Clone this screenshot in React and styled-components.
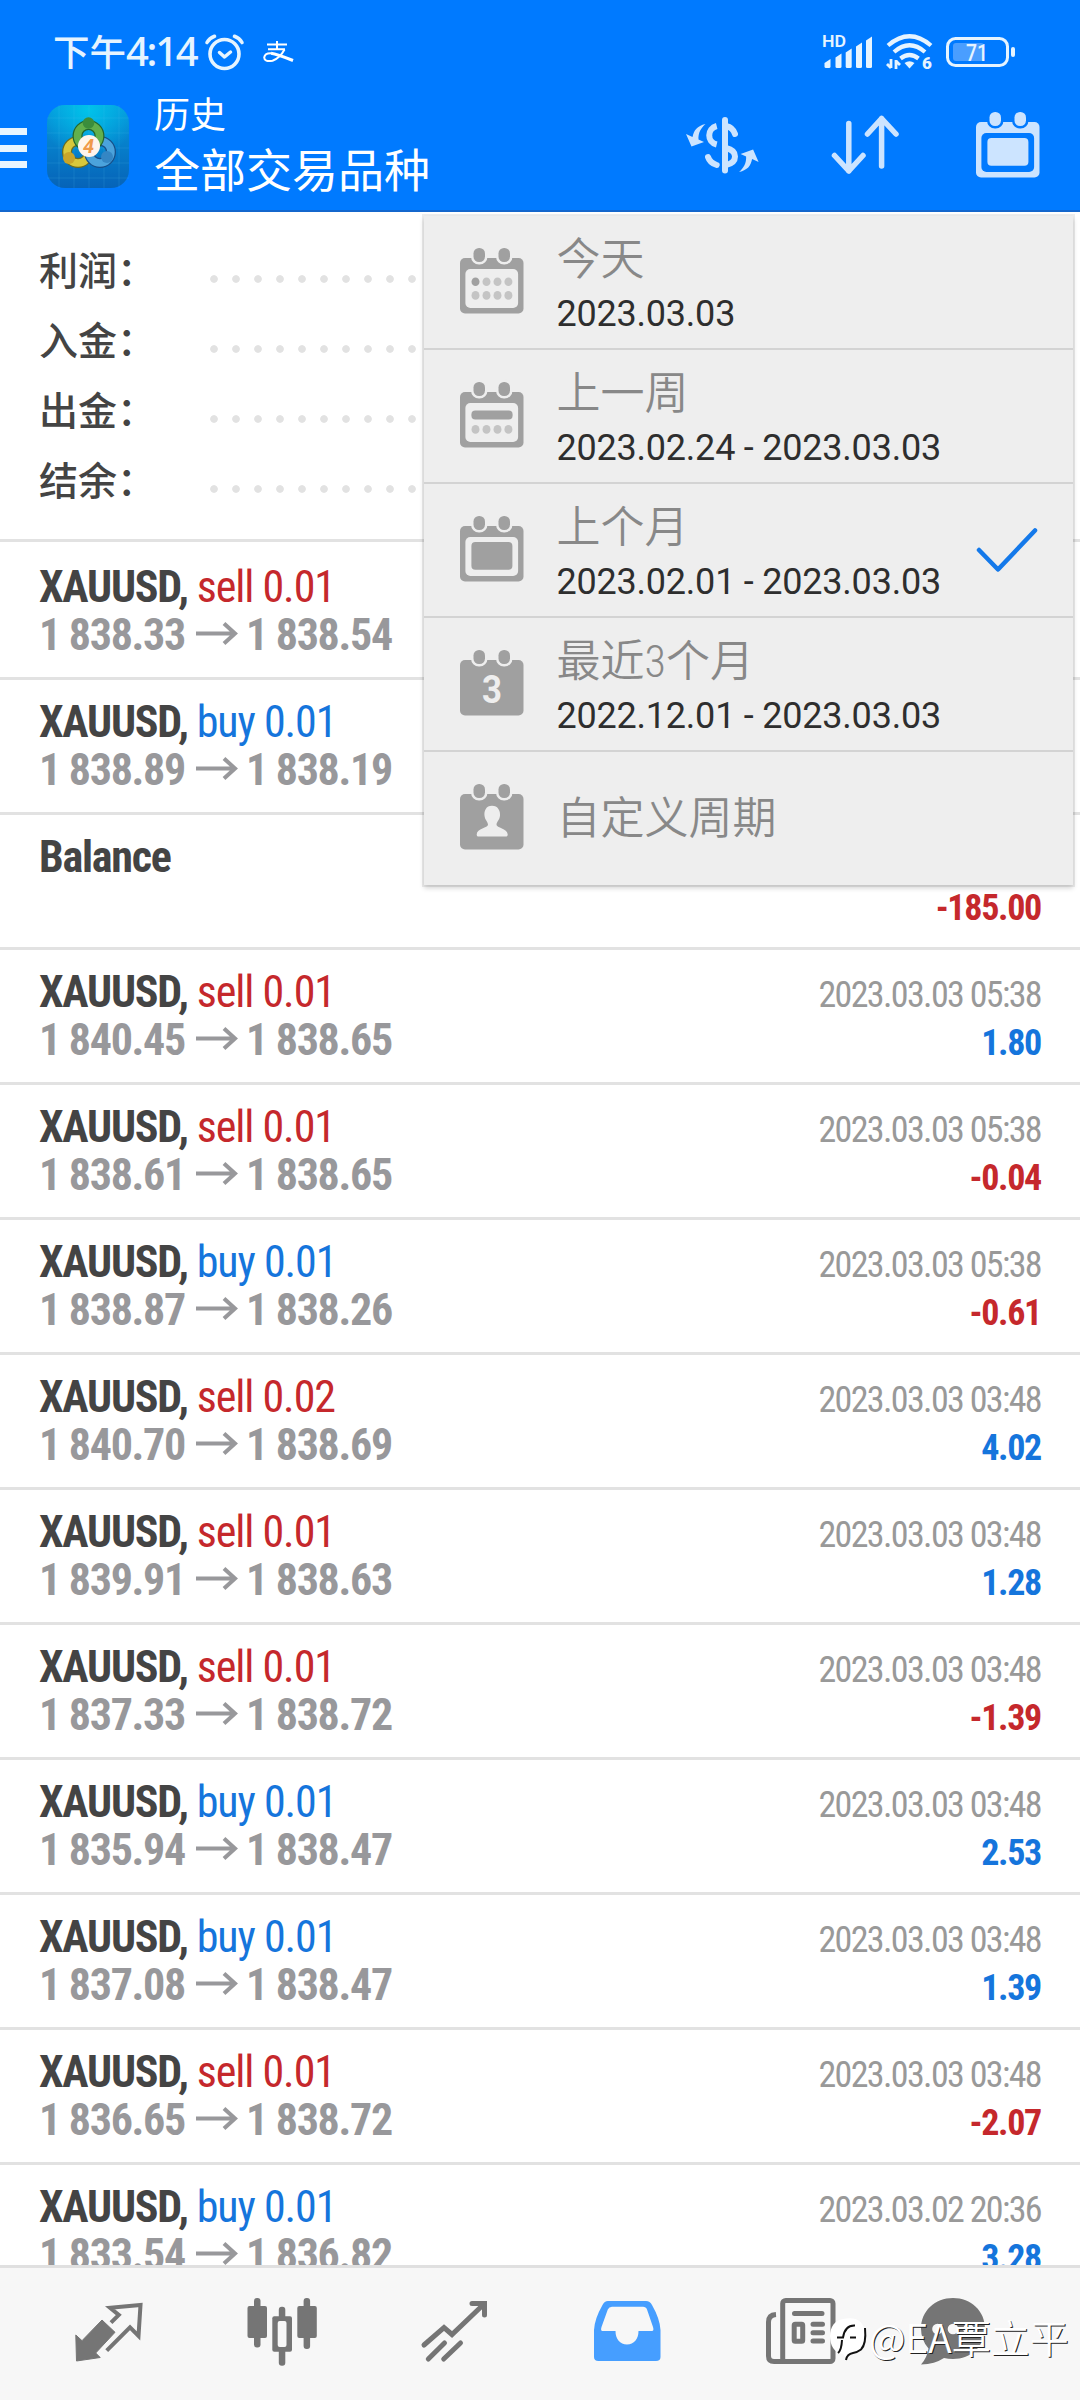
import React from "react";
import styled, { createGlobalStyle } from "styled-components";

const BLUE = "#007aff";
const PALE = "#cce4ff";
const GREY = "#a0a0a0";
const MENU_BG = "#eeeeee";
const NAV = "#757575";

const GlobalStyle = createGlobalStyle`
  body {
    margin: 0;
    background: #fff;
    font-family: Roboto, "Noto Sans CJK SC", sans-serif;
  }

  svg {
    flex: none;
    overflow: visible;
  }
`;

const Screen = styled.div`
  position: relative;
  display: flex;
  flex-direction: column;
  width: 1080px;
  height: 2400px;
  overflow: hidden;
`;

const Header = styled.header`
  box-sizing: border-box;
  flex: none;
  height: 212px;
  background: ${BLUE};
  border-bottom: 2px solid #1467cd;
  color: #fff;
`;

const StatusBar = styled.div`
  display: flex;
  align-items: center;
  box-sizing: border-box;
  height: 86px;
  padding: 18px 65px 0 53px;
  color: #e6f4ff;
`;

const Clock = styled.div`
  display: flex;
  align-items: center;
  margin-top: -3px;
  font: 500 36.5px/40px "Noto Sans CJK SC", sans-serif;
  white-space: nowrap;
`;

const Digits = styled.span`
  font: 500 40px/40px "Noto Sans", sans-serif;
  letter-spacing: -2.3px;
  width: 79px;
`;

const AlarmSlot = styled.div`
  display: flex;
  margin-right: 19px;
`;

const StatusRight = styled.div`
  display: flex;
  align-items: center;
  gap: 12px;
  margin-left: auto;
`;

const TitleBar = styled.div`
  display: flex;
  align-items: center;
  height: 120px;
`;

const Burger = styled.div`
  display: flex;
  flex-direction: column;
  justify-content: space-between;
  width: 27px;
  height: 40px;
  margin: 4px 20px 0 0;

  span {
    height: 7px;
    background: #e8f5ff;
  }
`;

const Titles = styled.div`
  margin: -9px 0 0 25px;
  flex: 1;
  font-family: "Noto Sans CJK SC", sans-serif;
  white-space: nowrap;
`;

const Subtitle = styled.div`
  font-size: 36px;
  line-height: 50px;
`;

const Title = styled.div`
  font-size: 46px;
  line-height: 60px;
`;

const Tools = styled.div`
  display: flex;
  align-items: center;
  margin-top: -2px;
  padding-right: 40px;

  svg + svg {
    margin-left: 73px;
  }

  svg:last-child {
    margin-left: 77px;
  }
`;

const Summary = styled.section`
  box-sizing: border-box;
  flex: none;
  height: 330px;
  padding: 21px 39px 0;
  border-bottom: 3px solid #e2e2e2;
`;

const SummaryRow = styled.div`
  display: flex;
  align-items: center;
  height: 70px;
`;

const SummaryLabel = styled.div`
  width: 171px;
  font: 500 39px/70px "Noto Sans CJK SC", sans-serif;
  color: #444;
`;

const Dots = styled.div`
  flex: 1;
  height: 8px;
  margin-top: 21px;
  background: radial-gradient(circle at 4px 4px, #e2e2e2 3.4px, transparent 4.2px) 0 0 / 22px 8px;
`;

const List = styled.main`
  box-sizing: border-box;
  flex: none;
  height: 1723px;
  padding-top: 3px;
  overflow: hidden;
`;

const Row = styled.div`
  box-sizing: border-box;
  height: 135px;
  padding: 18px 39px 0;
  border-bottom: 3px solid #e2e2e2;
`;

const Line = styled.div`
  display: flex;
  justify-content: space-between;
  align-items: baseline;
  height: 48px;
  line-height: 48px;
  font-family: "Roboto Condensed", Roboto, sans-serif;
  font-stretch: 75%;
  white-space: pre;
`;

const Deal = styled.div`
  font-size: 44px;
  font-weight: 700;
  letter-spacing: -1.25px;
  color: #444;
`;

const Side = styled.span`
  font-weight: 400;
  letter-spacing: -1.05px;
  color: ${(p) => (p.$type === "sell" ? "#c5282c" : "#1575dc")};
`;

const Prices = styled.div`
  font-size: 44px;
  font-weight: 700;
  letter-spacing: -1.3px;
  color: #98989b;

  svg {
    margin: 0 6.5px 0 11.5px;
    vertical-align: 5.5px;
  }
`;

const Time = styled.div`
  font-size: 36px;
  letter-spacing: -1.65px;
  color: #999;
`;

const Profit = styled.div`
  font-size: 36px;
  font-weight: 700;
  letter-spacing: -1.3px;
  color: ${(p) => (p.$loss ? "#c5282c" : "#1575dc")};
`;

const Menu = styled.div`
  position: absolute;
  left: 424px;
  top: 216px;
  width: 649px;
  height: 669px;
  background: ${MENU_BG};
  box-shadow: 0 0 0 2px rgba(0, 0, 0, 0.07), 0 3px 5px rgba(0, 0, 0, 0.18);
`;

const MenuItem = styled.div`
  display: flex;
  align-items: center;
  box-sizing: border-box;
  height: 134px;
  padding: 0 35px 0 36px;
  border-bottom: 2px solid ${(p) => (p.$last ? "transparent" : "#d3d3d3")};

  svg:first-child {
    margin-top: -2px;
  }
`;

const MenuText = styled.div`
  margin-left: 32.5px;
  padding-top: ${(p) => (p.$dated ? 10 : 2)}px;
  flex: 1;
`;

const MenuTitle = styled.div`
  font: 350 44px/54px "Roboto", "Noto Sans CJK SC", sans-serif;
  font-stretch: 80%;
  color: #888;
`;

const MenuDates = styled.div`
  font: 400 36px/54px Roboto, sans-serif;
  letter-spacing: -0.22px;
  color: #2e2e2e;
`;

const BottomNav = styled.nav`
  display: flex;
  box-sizing: border-box;
  height: 135px;
  padding-left: 22px;
  border-top: 3px solid #e0e0e0;
  background: #f7f7f7;
`;

const Tab = styled.div`
  display: flex;
  justify-content: center;
  padding-top: ${(p) => p.$top}px;
  width: ${(p) => p.$w || 173}px;
`;

const Watermark = styled.div`
  position: absolute;
  left: 829px;
  top: 2309px;
  display: flex;
  align-items: center;
  gap: 3px;
  font: 350 39px/54px "Noto Sans CJK SC", sans-serif;
  color: #fff;
  text-shadow: 1px 1px 0 #222;
  white-space: nowrap;

  svg {
    margin-top: 8px;
  }
`;

const deals = [
  { type: "sell", volume: "0.01", from: "1 838.33", to: "1 838.54" },
  { type: "buy", volume: "0.01", from: "1 838.89", to: "1 838.19" },
  { balance: true, profit: "-185.00" },
  { type: "sell", volume: "0.01", from: "1 840.45", to: "1 838.65", time: "2023.03.03 05:38", profit: "1.80" },
  { type: "sell", volume: "0.01", from: "1 838.61", to: "1 838.65", time: "2023.03.03 05:38", profit: "-0.04" },
  { type: "buy", volume: "0.01", from: "1 838.87", to: "1 838.26", time: "2023.03.03 05:38", profit: "-0.61" },
  { type: "sell", volume: "0.02", from: "1 840.70", to: "1 838.69", time: "2023.03.03 03:48", profit: "4.02" },
  { type: "sell", volume: "0.01", from: "1 839.91", to: "1 838.63", time: "2023.03.03 03:48", profit: "1.28" },
  { type: "sell", volume: "0.01", from: "1 837.33", to: "1 838.72", time: "2023.03.03 03:48", profit: "-1.39" },
  { type: "buy", volume: "0.01", from: "1 835.94", to: "1 838.47", time: "2023.03.03 03:48", profit: "2.53" },
  { type: "buy", volume: "0.01", from: "1 837.08", to: "1 838.47", time: "2023.03.03 03:48", profit: "1.39" },
  { type: "sell", volume: "0.01", from: "1 836.65", to: "1 838.72", time: "2023.03.03 03:48", profit: "-2.07" },
  { type: "buy", volume: "0.01", from: "1 833.54", to: "1 836.82", time: "2023.03.02 20:36", profit: "3.28" },
];

const periods = [
  { kind: "day", title: "今天", dates: "2023.03.03" },
  { kind: "week", title: "上一周", dates: "2023.02.24 - 2023.03.03" },
  { kind: "month", title: "上个月", dates: "2023.02.01 - 2023.03.03", checked: true },
  { kind: "quarter", title: "最近3个月", dates: "2022.12.01 - 2023.03.03" },
  { kind: "custom", title: "自定义周期" },
];

const CalendarIcon = ({ kind, color = GREY, bg = MENU_BG }) => (
  <svg width="64" height="66" viewBox="0 0 64 66">
    <rect y="10" width="63.5" height="55.5" rx="5" fill={color} />
    {[13.5, 38.5].map((x) => (
      <rect key={x} x={x} y="0" width="11.5" height="14" rx="5.5" fill={color} stroke={bg} strokeWidth="5" paintOrder="stroke" />
    ))}
    {["day", "week", "month"].includes(kind) && (
      <rect x="5.4" y="21" width="52.7" height="39" rx="5" fill={bg} />
    )}
    {kind === "day" &&
      [15.5, 26.5, 37.5, 48.4].map((x, i) => (
        <ellipse key={x} cx={x} cy="33.7" rx="4" ry="4.3" fill={i ? "#c4c4c4" : color} />
      ))}
    {kind === "week" && <rect x="11.4" y="28.5" width="41.2" height="9" rx="4" fill={color} />}
    {(kind === "day" || kind === "week") &&
      [15.5, 26.5, 37.5, 48.4].map((x) => <ellipse key={x} cx={x} cy="47.4" rx="4" ry="4.3" fill="#c4c4c4" />)}
    {kind === "month" && <rect x="11.4" y="26" width="41" height="27.7" rx="4" fill={color} />}
    {kind === "quarter" && (
      <text x="32" y="52.5" textAnchor="middle" fontFamily="Roboto" fontWeight="700" fontSize="38" fill={bg} textLength="20" lengthAdjust="spacingAndGlyphs">
        3
      </text>
    )}
    {kind === "custom" && (
      <path
        d="M32 21.7c-6 0-8 5-7.5 10 .5 4.5 3.5 6 3.5 9 0 3-11 3.5-11.3 9.5 0 1.500.5 2.300 2 2.300h27c1.500 0 2-.8 2-2.300C47.300 44.200 36.500 43.700 36.500 40.700c0-3 3-4.500 3.500-9 .5-5-2-10-8-10z"
        fill={bg}
      />
    )}
  </svg>
);

const AlarmIcon = () => (
  <svg width="39" height="37" viewBox="0 0 39 37" fill="none" stroke="currentColor" strokeLinecap="round">
    <circle cx="19.5" cy="20" r="14.5" strokeWidth="3.6" />
    <path d="M14.5 18.5l5 4.5 6-5" strokeWidth="3.5" strokeLinejoin="round" />
    <path d="M2 8.5Q4.5 4 9.5 2.3M37 8.5Q34.5 4 29.5 2.3" strokeWidth="3.6" />
  </svg>
);

const PayIcon = () => (
  <svg width="31" height="22" viewBox="0 0 31 22" fill="none" stroke="#fff" strokeWidth="2">
    <path d="M4 3.5h20M14 0v8M5 8.2h17" />
    <path d="M21.5 8.5Q17 17 9.5 19.8 1.2 21 1.2 16.5 1.8 12 8 12.2" />
    <path d="M8 12.2Q14 13 30 19.5" strokeWidth="3" />
  </svg>
);

const SignalIcon = () => (
  <svg width="52" height="34" viewBox="0 0 52 34" fill="currentColor">
    <text x="0" y="12" fontFamily="Roboto" fontWeight="600" fontSize="17" textLength="24" lengthAdjust="spacingAndGlyphs">HD</text>
    {[[2.5, 24], [13.5, 18.5], [23.7, 13.5], [34, 7.5], [44, 1.5]].map(([x, y]) => (
      <path key={x} d={`M${x} ${y + 4}L${x + 6} ${y}V31.5Q${x + 6} 33 ${x + 4.5} 33H${x + 1.5}Q${x} 33 ${x} 31.5Z`} />
    ))}
  </svg>
);

const WifiIcon = () => (
  <svg width="48" height="36" viewBox="0 0 48 36" fill="none" stroke="currentColor" strokeWidth="4.2">
    <path d="M2 11.5Q23.5-7 45 11.5M8 18Q23.5 4.5 39 18M14.5 24.5Q23.5 17.5 32.5 24.5" />
    <path d="M18.5 29Q23.5 25.5 28.5 29L23.5 34.5z" fill="currentColor" stroke="none" />
    <path d="M5 25v9M1 30l4 4M10 35v-9M10 27l4 4" strokeWidth="2.8" />
    <text x="36" y="34.5" stroke="none" fill="currentColor" fontFamily="Roboto" fontWeight="900" fontSize="17">6</text>
  </svg>
);

const BatteryIcon = () => (
  <svg width="69" height="30" viewBox="0 0 69 30">
    <rect x="1.5" y="1.5" width="60" height="27" rx="8" fill="none" stroke="currentColor" strokeWidth="3" />
    <rect x="7" y="6" width="31" height="18" rx="3" fill="#4a9eff" />
    <rect x="65" y="10" width="4" height="10" rx="2" fill="currentColor" />
    <text x="31" y="23.5" textAnchor="middle" fill="currentColor" fontFamily="Roboto" fontWeight="500" fontSize="24" textLength="22" lengthAdjust="spacingAndGlyphs">71</text>
  </svg>
);

const AppIcon = () => (
  <svg width="82" height="83" viewBox="0 0 82 83">
    <defs>
      <linearGradient id="tile" x1="0" y1="0" x2="0" y2="1">
        <stop offset="0" stopColor="#0699dc" />
        <stop offset="1" stopColor="#0663b8" />
      </linearGradient>
      <radialGradient id="shine" cx=".5" cy=".05" r=".6">
        <stop offset="0" stopColor="#00c3ea" />
        <stop offset="1" stopColor="#00c3ea" stopOpacity="0" />
      </radialGradient>
    </defs>
    <rect width="82" height="83" rx="18" fill="url(#tile)" />
    <rect width="82" height="83" rx="18" fill="url(#shine)" />
    <path d="M12 0v83M27 0v83M42 0v83M57 0v83M72 0v83M0 13h82M0 28h82M0 43h82M0 58h82M0 73h82" stroke="#5fd0f5" strokeOpacity=".15" />
    <g fill="none">
      <circle cx="31" cy="47" r="11" stroke="#6b6c20" strokeWidth="10" />
      <circle cx="31" cy="47" r="11" stroke="#d8c83c" strokeWidth="7.5" />
      <circle cx="53" cy="47" r="11" stroke="#174f88" strokeWidth="10" />
      <circle cx="53" cy="47" r="11" stroke="#4ba3dc" strokeWidth="7.5" />
      <circle cx="41.5" cy="31" r="11" stroke="#23662e" strokeWidth="10" />
      <circle cx="41.5" cy="31" r="11" stroke="#62b04c" strokeWidth="7.5" />
    </g>
    <circle cx="41.5" cy="18" r="5.8" fill="#3b8d3c" />
    <circle cx="22" cy="53" r="6" fill="#c9a52a" />
    <circle cx="60" cy="52" r="6" fill="#3486c4" />
    <circle cx="42" cy="41" r="11" fill="#fff5ec" />
    <text x="41.5" y="48" textAnchor="middle" fontFamily="Roboto" fontWeight="700" fontStyle="italic" fontSize="20" fill="#f09a4a">4</text>
  </svg>
);

const DollarIcon = () => (
  <svg width="73" height="57" viewBox="0 0 73 57" fill="none" stroke={PALE} strokeWidth="6">
    <path d="M39 3v50.5" strokeLinecap="round" />
    <path d="M30.7 9C21 11.5 20.5 25 30.7 27.5" />
    <path d="M40 9Q47 10.5 49 17M22 40Q24 46 30.7 48" strokeLinecap="round" />
    <path d="M40 31Q49 33 49 39.5T40 48" />
    <g fill={PALE} stroke="none">
      <path d="M19.5 7C11 9 8 13 6.5 20L0 17 5.5 29.5 18 25 12.5 22.5C12 16 15 11 19.5 7Z" />
      <path d="M19.5 7C11 9 8 13 6.5 20L0 17 5.5 29.5 18 25 12.5 22.5C12 16 15 11 19.5 7Z" transform="rotate(180 36.3 31)" />
    </g>
  </svg>
);

const SortIcon = () => (
  <svg width="67" height="60" viewBox="0 0 67 60" fill="none" stroke={PALE} strokeWidth="5.5" strokeLinecap="round" strokeLinejoin="round">
    <path d="M16.8 8.5V56M2.5 40.5L16.8 56 31 40.5M49.6 51V3.5M35.5 19L49.6 3.5 64 19" />
  </svg>
);

const ArrowIcon = () => (
  <svg width="43" height="23" viewBox="0 0 43 23" fill="none" stroke="currentColor" strokeWidth="4">
    <path d="M0 11.5h39M28 1.5l11 10-11 10" />
  </svg>
);

const CheckIcon = () => (
  <svg width="62" height="44" viewBox="0 0 62 44" fill="none" stroke="#1479ea" strokeWidth="4.5" strokeLinecap="round" strokeLinejoin="round">
    <path d="M3 22l19 19.5L59 2.5" />
  </svg>
);

const TradeIcon = () => (
  <svg width="68" height="60" viewBox="0 0 68 60">
    <path d="M.8 32L7 37.7 27 17 40 29.3 20.7 50 25.2 54.5 1.5 58z" fill={NAV} stroke={NAV} strokeLinejoin="round" />
    <path d="M36 19.7L43.8 12 35 4.7 65.5 1.9 63.5 33 55 24.3 31.7 47.7" fill="none" stroke={NAV} strokeWidth="4" />
  </svg>
);

const CandlesIcon = () => (
  <svg width="70" height="68" viewBox="0 0 70 68" fill={NAV}>
    <rect x="7" width="6.5" height="49.5" rx="3" />
    <rect x=".5" y="8" width="19.5" height="32" rx="2" />
    <rect x="31.8" y="8.7" width="6.5" height="59" rx="3" />
    <rect x="25.3" y="18.3" width="19.7" height="35.5" rx="2" />
    <rect x="30.7" y="23" width="8.8" height="26" rx="2" fill="#f7f7f7" />
    <rect x="56.6" width="6.5" height="51" rx="3" />
    <rect x="50.3" y="8" width="19.5" height="32" rx="2" />
  </svg>
);

const TrendIcon = () => (
  <svg width="67" height="62" viewBox="0 0 67 62" fill="none" stroke={NAV} strokeWidth="5" strokeLinecap="round">
    <path d="M3 45L23 27.5 31 34.5 63 4M51 3.5H63.5V15M7.3 59L23.5 43M22.7 59L39.5 43" />
  </svg>
);

const InboxIcon = () => (
  <svg width="67" height="60" viewBox="0 0 67 60">
    <path
      fillRule="evenodd"
      fill="#469eff"
      d="M14 0H52Q56 0 58 4 66 18 66.5 29V56Q66.5 60 62 60H4.5Q0 60 0 56V29Q.5 18 8.5 4 10.5 0 14 0ZM18 5.7Q15 5.7 13.8 8.5L7.5 26Q6.3 30 8.5 30H21.5C21.5 38 26 43.5 33 43.5S44.5 38 44.5 30H58Q60.2 30 59 26L53 8.5Q52 5.7 49 5.7Z"
    />
  </svg>
);

const NewsIcon = () => (
  <svg width="70" height="66" viewBox="0 0 70 66" fill="none" stroke={NAV} strokeWidth="5">
    <path d="M10 16.5Q2.5 17 2.5 24V58Q2.5 63.5 8 63.5H64" />
    <rect x="16.7" y="2.5" width="50.3" height="61" rx="3" />
    <path d="M28.5 15.5H56M47 26.3H56.5M47 34.7H56.5M47 43H56.5" strokeLinecap="round" />
    <rect x="28.2" y="26.3" width="8.5" height="17" rx="1" />
  </svg>
);

const ChatIcon = () => (
  <svg width="66" height="67" viewBox="0 0 66 67">
    <path d="M33 0C51 0 65 13 65 30.5S51 61 33 61Q28 61 24 60 15 66 1 66.5 7 60 8.5 50.5 1 42 1 30.5C1 13 15 0 33 0Z" fill={NAV} />
    {[17.5, 33, 48.5].map((x) => <circle key={x} cx={x} cy="31" r="5.3" fill="#f7f7f7" />)}
  </svg>
);

const WatermarkLogo = () => (
  <svg width="37" height="44" viewBox="0 0 37 44">
    <path d="M14 1C28-2 36 4 36 17 36 28 30 34 22 36L18 42 14 36C5 35 1 27 1 18 1 9 6 2 14 1Z" fill="#fff" />
    <path d="M8 19.500H14Q16 7 26 7.500M9 35Q12.500 32 13 22M21 19.500h6M36 10Q37.500 26 32 31.500 28 34.500 24 35 18 36 17 42" fill="none" stroke="#111" strokeWidth="2" />
  </svg>
);

const DealRow = ({ balance, type, volume, from, to, time, profit }) => (
  <Row>
    <Line>
      {balance ? (
        <Deal>Balance</Deal>
      ) : (
        <Deal>
          XAUUSD, <Side $type={type}>{type} {volume}</Side>
        </Deal>
      )}
      {time && <Time>{time}</Time>}
    </Line>
    <Line>
      <Prices>
        {balance ? " " : (
          <>
            {from}
            <ArrowIcon />
            {to}
          </>
        )}
      </Prices>
      {profit && <Profit $loss={profit.startsWith("-")}>{profit}</Profit>}
    </Line>
  </Row>
);

const App = () => (
  <Screen>
    <GlobalStyle />
    <Header>
      <StatusBar>
        <Clock>下午<Digits>4:14</Digits></Clock>
        <AlarmSlot><AlarmIcon /></AlarmSlot>
        <PayIcon />
        <StatusRight>
          <SignalIcon />
          <WifiIcon />
          <BatteryIcon />
        </StatusRight>
      </StatusBar>
      <TitleBar>
        <Burger><span /><span /><span /></Burger>
        <AppIcon />
        <Titles>
          <Subtitle>历史</Subtitle>
          <Title>全部交易品种</Title>
        </Titles>
        <Tools>
          <DollarIcon />
          <SortIcon />
          <CalendarIcon kind="month" color={PALE} bg={BLUE} />
        </Tools>
      </TitleBar>
    </Header>
    <Summary>
      {["利润", "入金", "出金", "结余"].map((label) => (
        <SummaryRow key={label}>
          <SummaryLabel>{label}：</SummaryLabel>
          <Dots />
        </SummaryRow>
      ))}
    </Summary>
    <List>
      {deals.map((deal, i) => <DealRow key={i} {...deal} />)}
    </List>
    <BottomNav>
      <Tab $top={35}><TradeIcon /></Tab>
      <Tab $top={30}><CandlesIcon /></Tab>
      <Tab $top={32}><TrendIcon /></Tab>
      <Tab $top={33}><InboxIcon /></Tab>
      <Tab $top={30}><NewsIcon /></Tab>
      <Tab $top={30} $w={131}><ChatIcon /></Tab>
    </BottomNav>
    <Menu>
      {periods.map(({ kind, title, dates, checked }, i) => (
        <MenuItem key={kind} $last={i === periods.length - 1}>
          <CalendarIcon kind={kind} />
          <MenuText $dated={!!dates}>
            <MenuTitle>{title}</MenuTitle>
            {dates && <MenuDates>{dates}</MenuDates>}
          </MenuText>
          {checked && <CheckIcon />}
        </MenuItem>
      ))}
    </Menu>
    <Watermark>
      <WatermarkLogo />
      @EA覃立平
    </Watermark>
  </Screen>
);

export default App;
